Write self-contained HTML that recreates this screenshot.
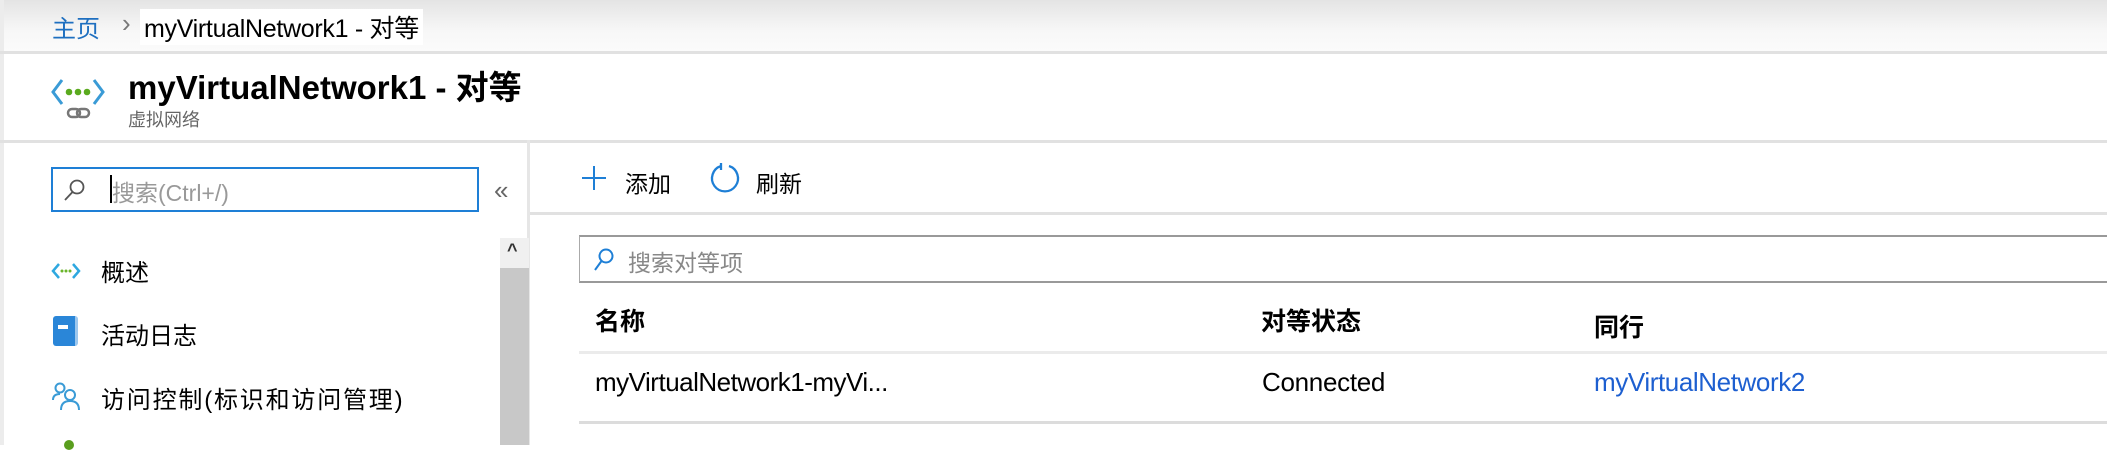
<!DOCTYPE html>
<html><head><meta charset="utf-8"><style>
*{margin:0;padding:0;box-sizing:border-box}
body{width:2107px;height:445px;overflow:hidden;background:#fff;position:relative;font-family:"Liberation Sans","Noto Sans CJK SC",sans-serif;color:#000}
.a{position:absolute;white-space:nowrap}
.hl{position:absolute;height:3px;background:#e1e1e1}
</style></head><body>
<div class="a" style="left:0;top:0;width:2107px;height:51px;background:linear-gradient(#e4e4e4,#f7f7f7 60%,#fbfbfb)"></div>
<div class="a" style="left:0;top:0;width:4px;height:445px;background:#ececec"></div>
<div class="a" style="left:52px;top:9px;font-size:24px;color:#1e6fc0">主页</div>
<div class="a" style="left:122px;top:8px;font-size:26px;color:#777">›</div>
<div class="a" style="left:140px;top:9px;font-size:25px;background:#fff;padding:0 4px;letter-spacing:-0.3px">myVirtualNetwork1 - 对等</div>
<div class="hl" style="left:0;top:51px;width:2107px"></div>
<svg class="a" style="left:50px;top:74px" width="56" height="56" viewBox="0 0 56 56">
<path d="M12 6 L3 18 L12 30" fill="none" stroke="#3a9bd6" stroke-width="3"/>
<path d="M44 6 L53 18 L44 30" fill="none" stroke="#3a9bd6" stroke-width="3"/>
<circle cx="19" cy="18" r="3.3" fill="#5aaa1e"/><circle cx="28" cy="18" r="3.3" fill="#5aaa1e"/><circle cx="37" cy="18" r="3.3" fill="#5aaa1e"/>
<rect x="18" y="35" width="12" height="8" rx="4" fill="none" stroke="#777" stroke-width="2.5"/>
<rect x="27" y="35" width="12" height="8" rx="4" fill="none" stroke="#777" stroke-width="2.5"/>
</svg>
<div class="a" style="left:128px;top:61px;font-size:33px;font-weight:bold">myVirtualNetwork1 - 对等</div>
<div class="a" style="left:128px;top:106px;font-size:18px;color:#666">虚拟网络</div>
<div class="hl" style="left:0;top:140px;width:2107px"></div>
<div class="a" style="left:527px;top:140px;width:3px;height:305px;background:#e6e6e6"></div>
<div class="a" style="left:51px;top:167px;width:428px;height:45px;border:2px solid #1e7fd6"></div>
<svg class="a" style="left:62px;top:177px" width="26" height="26" viewBox="0 0 26 26"><circle cx="15" cy="10" r="6.5" fill="none" stroke="#555" stroke-width="1.8"/><path d="M10.5 15 L3 23" stroke="#555" stroke-width="1.8"/></svg>
<div class="a" style="left:110px;top:175px;width:2px;height:28px;background:#000"></div>
<div class="a" style="left:112px;top:174px;font-size:23px;color:#999">搜索(Ctrl+/)</div>
<div class="a" style="left:494px;top:175px;font-size:26px;color:#666">«</div>
<div class="a" style="left:500px;top:238px;width:29px;height:30px;background:#f0f0f0"></div>
<div class="a" style="left:507px;top:240px;font-size:18px;font-weight:bold;color:#333">^</div>
<div class="a" style="left:500px;top:268px;width:29px;height:177px;background:#c8c8c8"></div>
<svg class="a" style="left:51px;top:262px" width="30" height="18" viewBox="0 0 30 18"><path d="M8 2 L2 9 L8 16 M22 2 L28 9 L22 16" fill="none" stroke="#2ea8e0" stroke-width="2.5"/><circle cx="11" cy="9" r="1.5" fill="#6ab52a"/><circle cx="15" cy="9" r="1.5" fill="#6ab52a"/><circle cx="19" cy="9" r="1.5" fill="#6ab52a"/></svg>
<div class="a" style="left:101px;top:253px;font-size:24px">概述</div>
<div class="a" style="left:53px;top:316px;width:25px;height:30px;background:#2a86d8;border-radius:3px;border-right:3px solid #9cc7ee"></div>
<div class="a" style="left:58px;top:325px;width:10px;height:4px;background:#fff"></div>
<div class="a" style="left:101px;top:316px;font-size:24px">活动日志</div>
<svg class="a" style="left:51px;top:382px" width="30" height="30" viewBox="0 0 30 30"><circle cx="9" cy="6" r="4.5" fill="none" stroke="#3a9bd6" stroke-width="2"/><path d="M2 18 Q2 12 9 12" fill="none" stroke="#3a9bd6" stroke-width="2"/><circle cx="19" cy="13" r="5" fill="none" stroke="#3a9bd6" stroke-width="2"/><path d="M10 28 Q10 19 19 19 Q28 19 28 28" fill="none" stroke="#3a9bd6" stroke-width="2"/></svg>
<div class="a" style="left:101px;top:380px;font-size:24px;letter-spacing:1.8px">访问控制(标识和访问管理)</div>
<div class="a" style="left:64px;top:440px;width:10px;height:10px;border-radius:50%;background:#5a9e1e"></div>
<svg class="a" style="left:580px;top:164px" width="28" height="28" viewBox="0 0 28 28"><path d="M14 2 V26 M2 14 H26" stroke="#1e7fd6" stroke-width="2"/></svg>
<div class="a" style="left:625px;top:165px;font-size:23px">添加</div>
<svg class="a" style="left:708px;top:162px" width="34" height="34" viewBox="0 0 34 34"><path d="M13 4 A13 13 0 1 0 21 4" fill="none" stroke="#1e7fd6" stroke-width="2.3"/><path d="M13 1 L13 8" stroke="#1e7fd6" stroke-width="2.3"/></svg>
<div class="a" style="left:756px;top:165px;font-size:23px">刷新</div>
<div class="hl" style="left:530px;top:212px;width:1577px"></div>
<div class="a" style="left:579px;top:235px;width:1540px;height:48px;border:2px solid #999;border-left:1px solid #aaa"></div>
<svg class="a" style="left:592px;top:247px" width="24" height="26" viewBox="0 0 24 26"><circle cx="14" cy="9" r="6.5" fill="none" stroke="#1e7fd6" stroke-width="2"/><path d="M9.5 14 L3 23" stroke="#1e7fd6" stroke-width="2"/></svg>
<div class="a" style="left:628px;top:244px;font-size:23px;color:#888">搜索对等项</div>
<div class="a" style="left:595px;top:302px;font-size:25px;font-weight:bold">名称</div>
<div class="a" style="left:1261px;top:302px;font-size:25px;font-weight:bold">对等状态</div>
<div class="a" style="left:1594px;top:308px;font-size:25px;font-weight:bold">同行</div>
<div class="hl" style="left:579px;top:351px;width:1528px;background:#ebebeb"></div>
<div class="a" style="left:595px;top:367px;font-size:26px;letter-spacing:-0.5px">myVirtualNetwork1-myVi...</div>
<div class="a" style="left:1262px;top:367px;font-size:26px;letter-spacing:-0.3px">Connected</div>
<div class="a" style="left:1594px;top:367px;font-size:26px;color:#1d5fd0;letter-spacing:-0.4px">myVirtualNetwork2</div>
<div class="hl" style="left:579px;top:421px;width:1528px;background:#dcdcdc"></div>
</body></html>
